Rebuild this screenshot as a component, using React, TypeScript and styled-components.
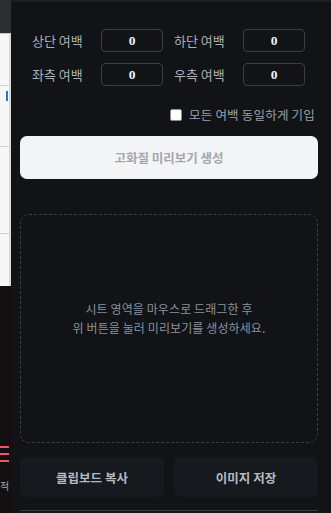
import React, { useState } from 'react';
import styled, { createGlobalStyle } from 'styled-components';

const GlobalStyle = createGlobalStyle`
  html, body {
    margin: 0;
    padding: 0;
    background: #111317;
  }
  body {
    font-family: 'Noto Sans CJK KR', 'Noto Sans', sans-serif;
  }
`;

const Screen = styled.div`
  display: flex;
  width: 331px;
  height: 513px;
  overflow: hidden;
`;

// sliver of the spreadsheet behind the panel
const SheetEdge = styled.div`
  width: 11px;
  flex-shrink: 0;
  display: flex;
  flex-direction: column;
`;

const SheetHeader = styled.div`
  height: 33px;
  background: #2c2d30;
  border-bottom: 1px solid #c9c9c9;
`;

const SheetCells = styled.div`
  height: 252px;
  background: #f7f7f7;
  border-right: 2px solid #d8d8d8;
  display: flex;
  flex-direction: column;
`;

const SheetRow = styled.div<{ $h: number }>`
  height: ${(p) => p.$h}px;
  border-bottom: 1px solid #cfcfcf;
  position: relative;
`;

const CellMark = styled.div`
  position: absolute;
  right: 1px;
  top: 5px;
  width: 2px;
  height: 10px;
  background: #2f6fd6;
`;

const SheetDark = styled.div`
  flex: 1;
  background: #140f10;
  display: flex;
  flex-direction: column;
  padding-top: 160px;
  gap: 5px;
`;

const RedLine = styled.div`
  width: 9px;
  height: 2px;
  background: #e35d5d;
`;

const SheetGlyph = styled.span`
  margin-top: 14px;
  font-size: 10px;
  color: #9aa6b0;
  line-height: 1;
`;

const Panel = styled.div`
  flex: 1;
  background: #111317;
  border-top: 2px solid #1c1e22;
  padding: 0 13px 0 9px;
  display: flex;
  flex-direction: column;
`;

const MarginGrid = styled.div`
  display: grid;
  grid-template-columns: 58px 62px 58px 62px;
  grid-auto-rows: 23px;
  column-gap: 11px;
  row-gap: 11px;
  margin: 27px 0 0 12px;
  align-items: center;
`;

const Label = styled.label`
  font-size: 13px;
  color: #aab0b8;
  white-space: nowrap;
`;

const NumInput = styled.input`
  box-sizing: border-box;
  width: 62px;
  height: 23px;
  background: #111317;
  border: 1px solid #3a3e45;
  border-radius: 4px;
  color: #f2f3f5;
  font-family: 'Liberation Serif', serif;
  font-weight: 700;
  font-size: 13.5px;
  text-align: center;
  outline: none;
  padding: 0;
`;

const SameRow = styled.label`
  display: flex;
  align-items: center;
  justify-content: flex-end;
  gap: 7px;
  margin-top: 22px;
  padding-right: 3px;
  height: 13px;
  font-size: 12.5px;
  color: #9ca2aa;
  letter-spacing: 0.2px;
`;

const Box = styled.span`
  width: 12px;
  height: 12px;
  background: #ffffff;
  border: 1px solid #8a8f96;
  border-radius: 2px;
  box-sizing: border-box;
`;

const GenerateButton = styled.button`
  margin-top: 15px;
  height: 43px;
  border: none;
  border-radius: 7px;
  background: #f3f4f6;
  color: #a3a7ae;
  font-family: inherit;
  font-size: 12.5px;
  font-weight: 700;
`;

const PreviewArea = styled.div`
  margin-top: 35px;
  height: 229px;
  box-sizing: border-box;
  border: 1px dashed #3b3f46;
  border-radius: 9px;
  padding-bottom: 22px;
  display: flex;
  align-items: center;
  justify-content: center;
  text-align: center;
  font-size: 12px;
  line-height: 19px;
  color: #8a929c;
  letter-spacing: 0.1px;
`;

const ActionRow = styled.div`
  margin-top: 14px;
  display: grid;
  grid-template-columns: 1fr 1fr;
  column-gap: 10px;
`;

const ActionButton = styled.button`
  height: 40px;
  border: none;
  border-radius: 6px;
  background: #16191e;
  color: #b6bbc2;
  font-family: inherit;
  font-size: 12.5px;
  font-weight: 700;
`;

const Divider = styled.div`
  margin-top: 13px;
  height: 1px;
  background: #3a3d43;
`;

const fields = ['상단 여백', '0', '하단 여백', '0', '좌측 여백', '0', '우측 여백', '0'];

export default function App() {
  const [values] = useState(fields);
  return (
    <>
      <GlobalStyle />
      <Screen>
        <SheetEdge>
          <SheetHeader />
          <SheetCells>
            <SheetRow $h={51} />
            <SheetRow $h={60}>
              <CellMark />
            </SheetRow>
            <SheetRow $h={86} />
          </SheetCells>
          <SheetDark>
            <RedLine />
            <RedLine />
            <RedLine />
            <SheetGlyph>적</SheetGlyph>
          </SheetDark>
        </SheetEdge>
        <Panel>
          <MarginGrid>
            {values.map((v, i) =>
              i % 2 === 0 ? (
                <Label key={i}>{v}</Label>
              ) : (
                <NumInput key={i} type="text" defaultValue={v} />
              )
            )}
          </MarginGrid>
          <SameRow>
            <Box />
            모든 여백 동일하게 기입
          </SameRow>
          <GenerateButton disabled>고화질 미리보기 생성</GenerateButton>
          <PreviewArea>
            시트 영역을 마우스로 드래그한 후
            <br />
            위 버튼을 눌러 미리보기를 생성하세요.
          </PreviewArea>
          <ActionRow>
            <ActionButton>클립보드 복사</ActionButton>
            <ActionButton>이미지 저장</ActionButton>
          </ActionRow>
          <Divider />
        </Panel>
      </Screen>
    </>
  );
}
